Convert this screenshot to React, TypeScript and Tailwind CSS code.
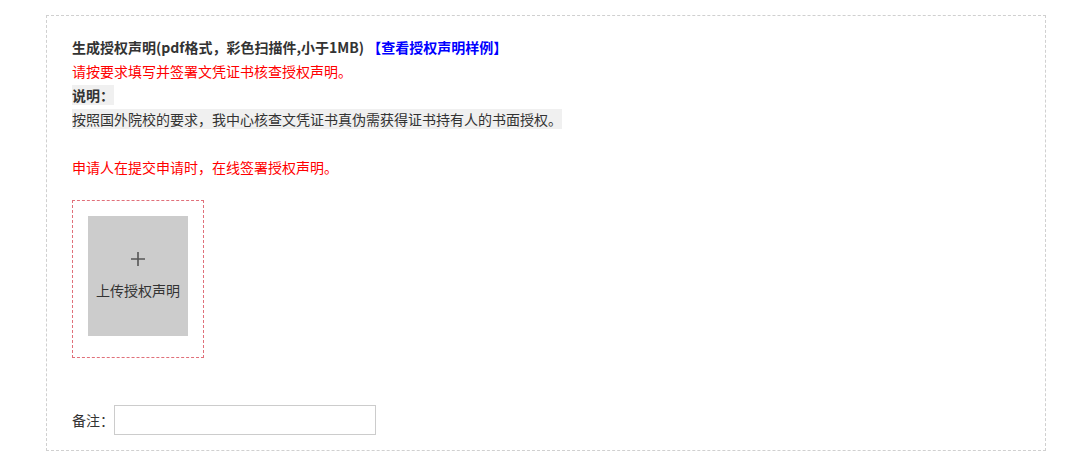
import { useState } from "react";

const App = () => {
  const [remark, setRemark] = useState("");

  return (
    <div
      className="min-h-screen bg-white pt-[15px] pl-[46px] text-[14px] leading-[24px] text-[#333]"
      style={{ fontFamily: '"Microsoft YaHei", "Noto Sans CJK SC", "Noto Sans", sans-serif' }}
    >
      <div className="w-[1000px] h-[436px] border border-dashed border-[#d0d0d0] pt-[19px] pl-[25px]">
        <div className="font-bold">
          生成授权声明(pdf格式，彩色扫描件,小于1MB){" "}
          <a href="#" className="text-[#0000ff]">
            【查看授权声明样例】
          </a>
        </div>
        <div className="text-[#ff0000]">请按要求填写并签署文凭证书核查授权声明。</div>
        <div>
          <span className="font-bold bg-[#f0f0f0]">说明：</span>
        </div>
        <div>
          <span className="bg-[#f0f0f0]">按照国外院校的要求，我中心核查文凭证书真伪需获得证书持有人的书面授权。</span>
        </div>
        <div className="h-[24px]" />
        <div className="text-[#ff0000]">申请人在提交申请时，在线签署授权声明。</div>

        <div className="mt-[21px] w-[132px] border border-dashed border-[#e0707a] pt-[15px] pl-[15px] pb-[21px]">
          <button
            type="button"
            className="w-[100px] h-[120px] bg-[#cccccc] flex flex-col items-center justify-start pt-[35px] text-[#333]"
          >
            <svg width="16" height="16" viewBox="0 0 16 16">
              <path d="M8 1v14M1 8h14" stroke="#555" strokeWidth="1.6" fill="none" />
            </svg>
            <span className="mt-[13px] text-[14px] leading-[20px]">上传授权声明</span>
          </button>
        </div>

        <div className="mt-[47px] flex items-center">
          <span>备注：</span>
          <input
            type="text"
            value={remark}
            onChange={(e) => setRemark(e.target.value)}
            className="w-[262px] h-[30px] border border-[#ccc] px-2 outline-none"
          />
        </div>
      </div>
    </div>
  );
};

export default App;
